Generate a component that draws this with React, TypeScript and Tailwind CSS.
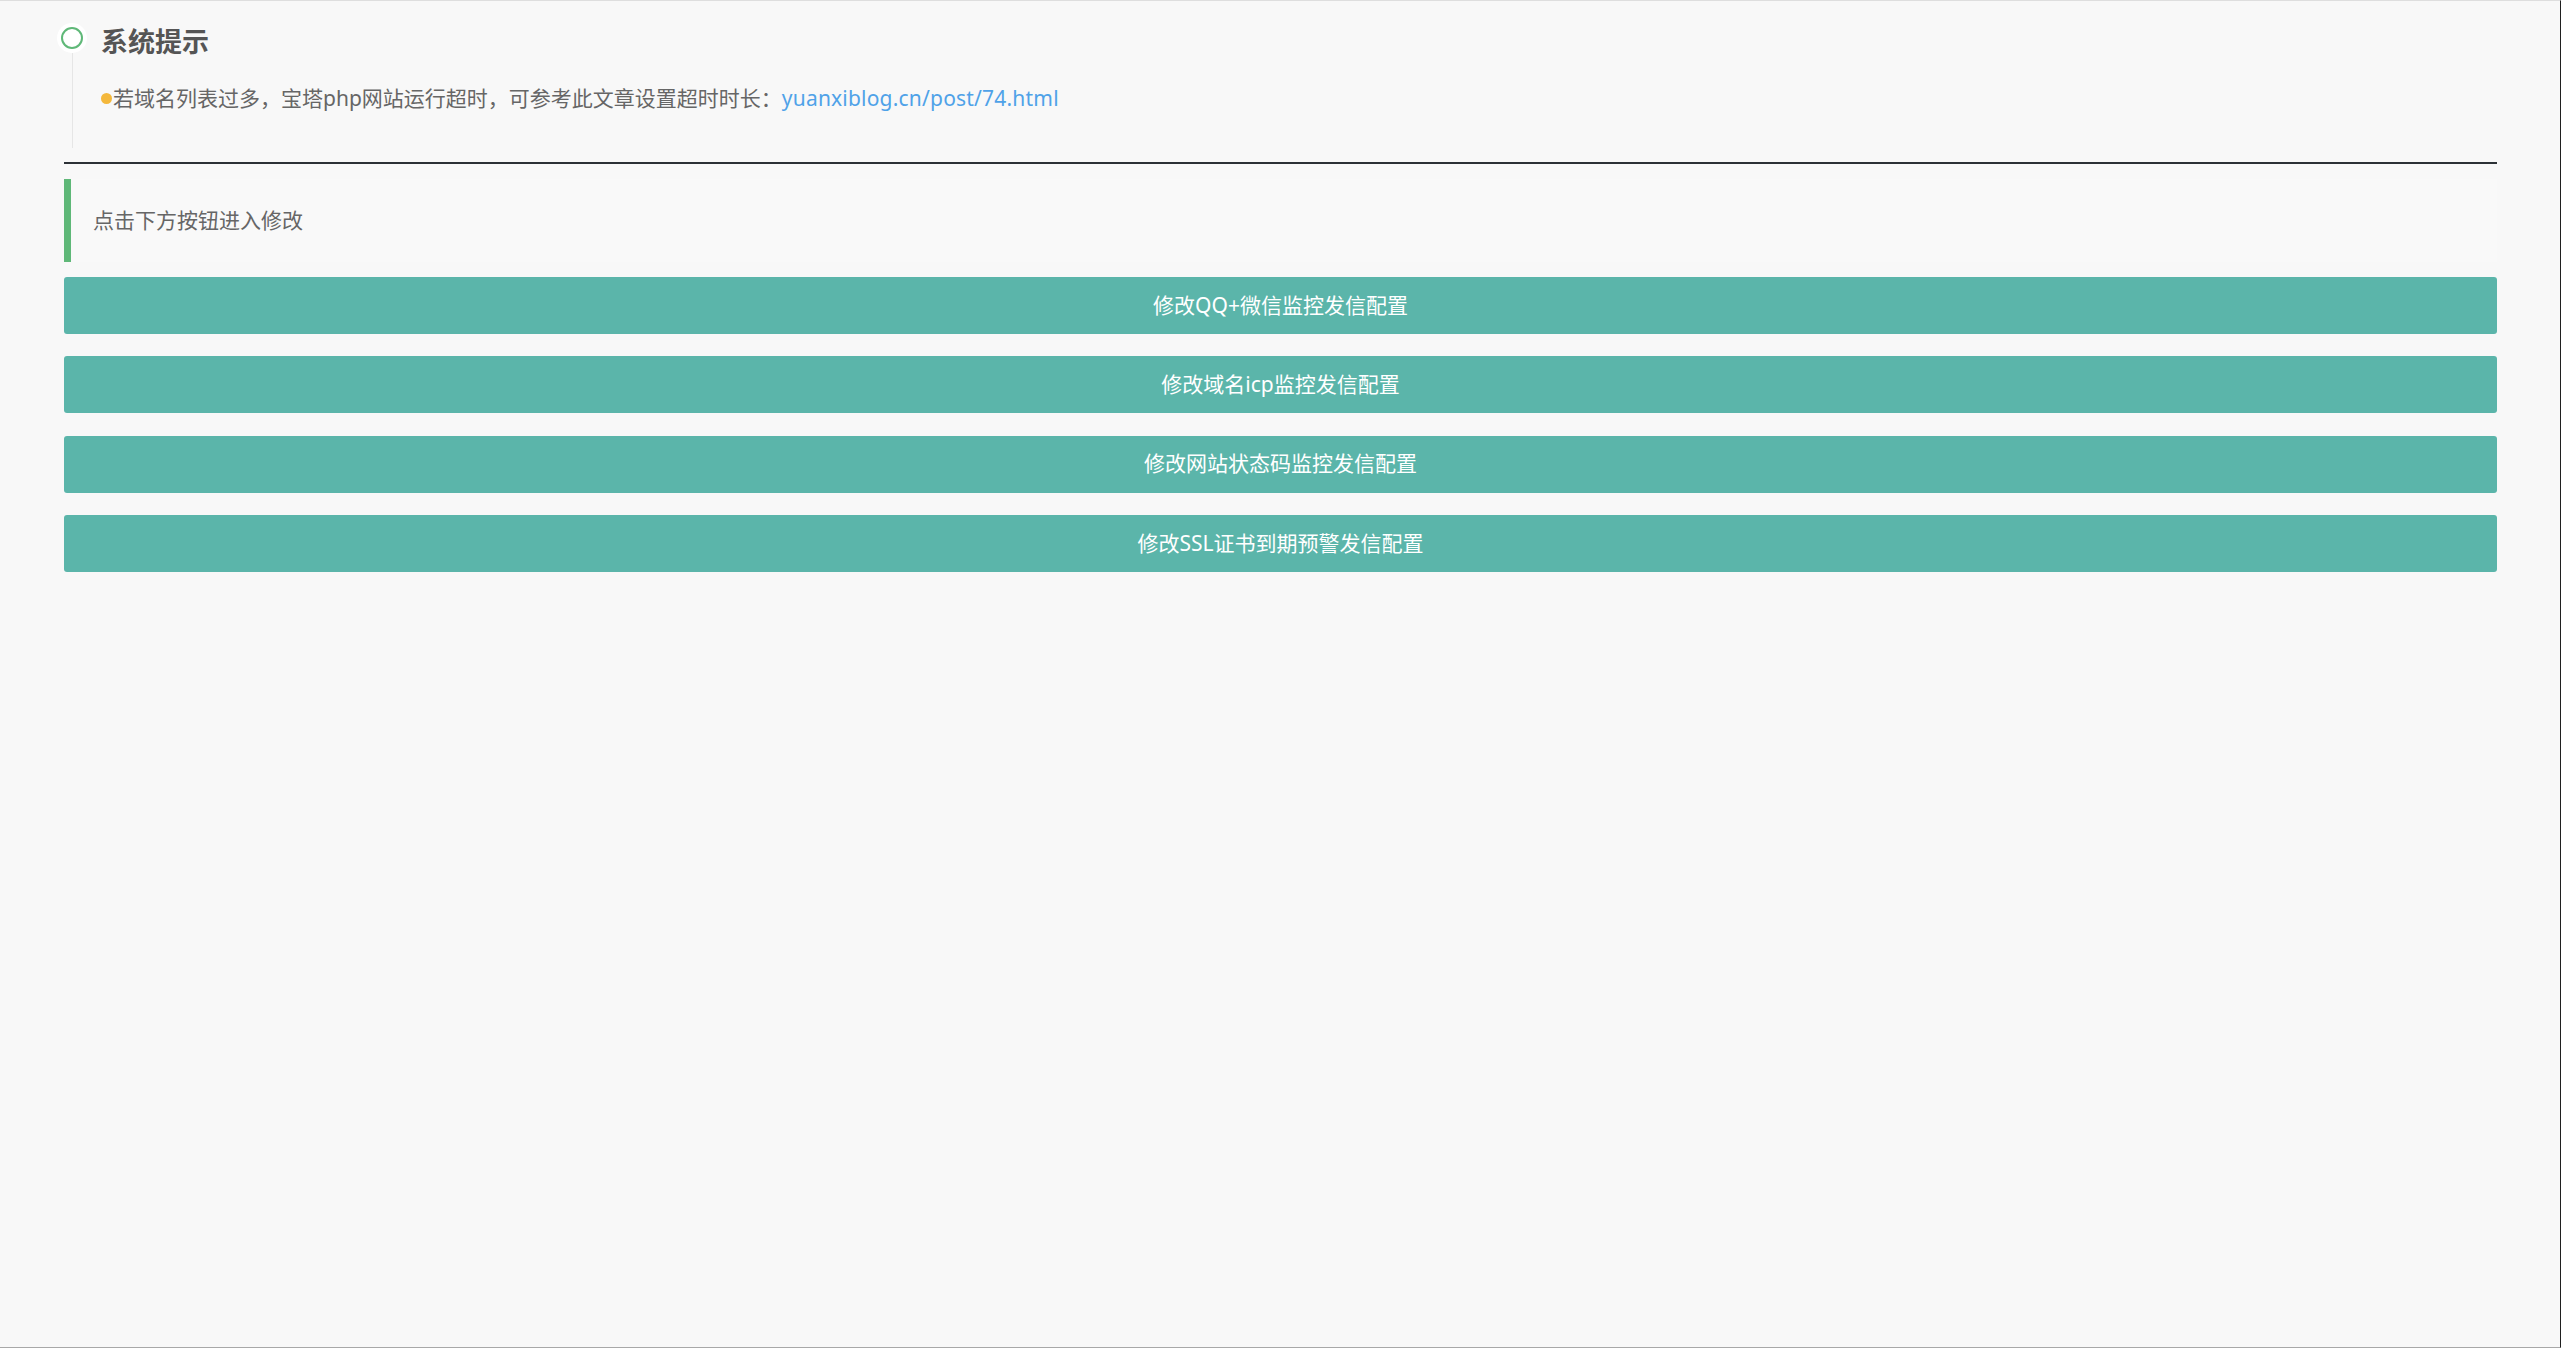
import React from "react";

const buttons = [
  "修改QQ+微信监控发信配置",
  "修改域名icp监控发信配置",
  "修改网站状态码监控发信配置",
  "修改SSL证书到期预警发信配置",
];

const font = "font-['Noto_Sans','Noto_Sans_CJK_SC',sans-serif]";

export default function App() {
  return (
    <div
      className={`h-[1348px] w-[2561px] bg-[#f8f8f8] border-t border-[#dedede] border-r border-r-[#202020] border-b border-b-[#a8a8a8] pl-[64px] pr-[63px] ${font}`}
    >
      {/* 系统提示 timeline */}
      <div className="flex pt-[22px]">
        <div className="flex flex-col items-center w-[30px] -ml-[7px]">
          <div className="w-[30px] h-[30px] rounded-full bg-white flex items-center justify-center shrink-0">
            <div className="w-[22px] h-[22px] rounded-full border-2 border-[#5fb878] bg-white" />
          </div>
          <div className="flex-1 w-px bg-[#e6e6e6]" />
        </div>
        <div className="ml-[14px] pb-[35px]">
          <h2 className="pt-[4px] text-[27px] leading-[30px] font-bold text-[#555]">系统提示</h2>
          <div className="mt-[26px] flex items-center text-[21px] leading-[30px] text-[#666]">
            <span className="w-[11px] h-[11px] rounded-full bg-[#f4b83c] inline-block mr-px" />
            <span>
              若域名列表过多，宝塔php网站运行超时，可参考此文章设置超时时长：
              <a href="#" className="text-[#4fa2e8] tracking-[0.2px]">
                yuanxiblog.cn/post/74.html
              </a>
            </span>
          </div>
        </div>
      </div>

      <div className="mt-[14px] h-[2px] bg-[#2c3136]" />

      {/* quote */}
      <div className="mt-[15px] h-[83px] flex items-center border-l-[7px] border-[#5fb878] bg-[#f9f9f9] pl-[22px] text-[21px] text-[#666]">
        点击下方按钮进入修改
      </div>

      <div className="mt-[15px] flex flex-col gap-[22.3px]">
        {buttons.map((b) => (
          <button
            key={b}
            className="h-[57px] w-full rounded-[3px] bg-[#5bb5aa] text-white text-[21px] flex items-center justify-center"
          >
            {b}
          </button>
        ))}
      </div>
    </div>
  );
}
